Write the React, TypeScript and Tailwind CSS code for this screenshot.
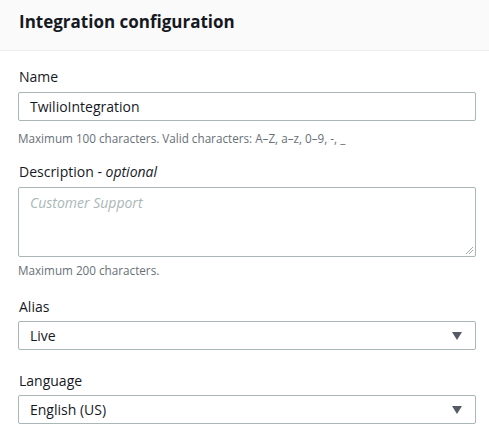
import React from 'react';

const font = { fontFamily: '"Open Sans", "Noto Sans", Arial, sans-serif' };

const Arrow: React.FC = () => (
  <svg width="10" height="8" viewBox="0 0 10 8" className="shrink-0">
    <path d="M0 0 H10 L5 8 Z" fill="#545b64" />
  </svg>
);

const Select: React.FC<{ value: string }> = ({ value }) => (
  <div className="flex items-center justify-between h-[29px] border border-[#aab7b8] rounded-[2px] bg-white pl-[11px] pr-[13px]">
    <span className="text-[14px] text-[#16191f]">{value}</span>
    <Arrow />
  </div>
);

export default function App() {
  return (
    <div className="w-[489px] h-[439px] bg-white overflow-hidden" style={font}>
      <div className="h-[51px] bg-[#fafafa] border-b border-[#eaeded] flex items-center px-[19px]">
        <h2 className="text-[17px] font-bold text-[#16191f] leading-none -mt-[8px]">Integration configuration</h2>
      </div>
      <div className="pl-[18px] pr-[13px] pt-[16px]">
        <div className="text-[14px] text-[#16191f] leading-[20px] pl-px">Name</div>
        <div className="mt-[5px] h-[29px] border border-[#aab7b8] rounded-[2px] flex items-center px-[11px] text-[14px] text-[#16191f]">
          TwilioIntegration
        </div>
        <div className="mt-[9px] text-[11.7px] text-[#687078] leading-[16px]">
          Maximum 100 characters. Valid characters: A–Z, a–z, 0–9, -, _
        </div>

        <div className="mt-[16px] text-[14px] text-[#16191f] leading-[20px] pl-px">
          Description - <span className="italic">optional</span>
        </div>
        <div className="relative mt-[5px] h-[70px] border border-[#aab7b8] rounded-[2px] px-[11px] pt-[2px]">
          <span className="text-[14px] italic text-[#aab7b8]">Customer Support</span>
          <svg width="7" height="7" viewBox="0 0 7 7" className="absolute right-[2px] bottom-[2px]">
            <path d="M7 0 L0 7 M7 3 L3 7" stroke="#879596" strokeWidth="0.8" />
          </svg>
        </div>
        <div className="mt-[5px] text-[11.7px] text-[#687078] leading-[16px]">Maximum 200 characters.</div>

        <div className="mt-[19px] text-[14px] text-[#16191f] leading-[20px] pl-px">Alias</div>
        <div className="mt-[4px]">
          <Select value="Live" />
        </div>

        <div className="mt-[21px] text-[14px] text-[#16191f] leading-[20px] pl-px">Language</div>
        <div className="mt-[4px]">
          <Select value="English (US)" />
        </div>
      </div>
    </div>
  );
}
